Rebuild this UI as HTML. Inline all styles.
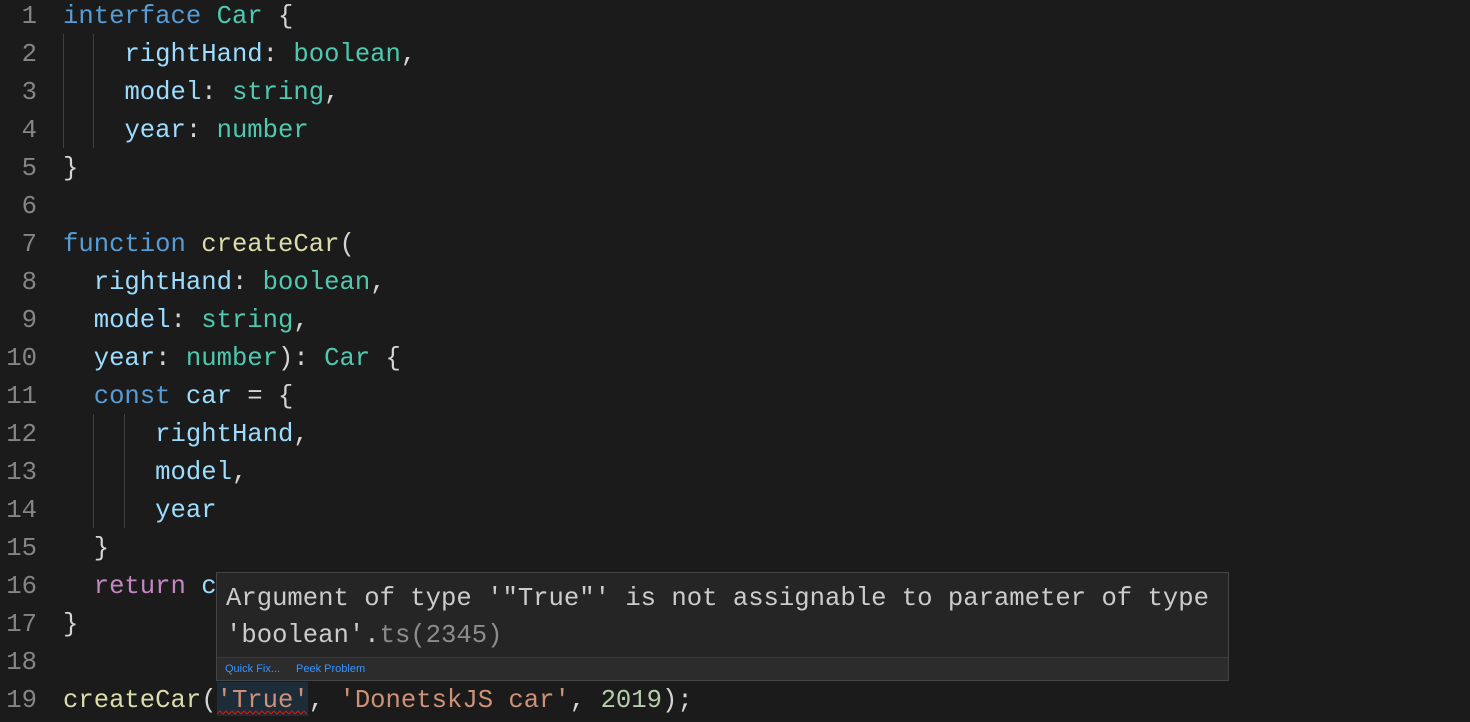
<!DOCTYPE html>
<html><head><meta charset="utf-8"><style>
html,body{margin:0;padding:0;background:#1b1b1b;width:1470px;height:722px;overflow:hidden}
.ed{position:absolute;left:0;top:-2px;font-family:"Liberation Mono",monospace;font-size:25.6px;line-height:38px;color:#d4d4d4;white-space:pre}
.ln{position:absolute;left:0;width:37px;text-align:right;color:#858585}
.code{position:absolute;left:63px}
.k{color:#569cd6}.t{color:#4ec9b0}.p{color:#9cdcfe}.f{color:#dcdcaa}.s{color:#ce9178}.n{color:#b5cea8}.r{color:#c586c0}
.g{position:absolute;width:1px;background:#404040}
.hov{position:absolute;left:216px;top:572px;width:1011px;height:107px;background:#252526;border:1px solid #454545}
.ht{position:absolute;left:9px;top:7px;font-family:"Liberation Mono",monospace;font-size:25.6px;line-height:37px;color:#cccccc;white-space:pre}
.foot{position:absolute;left:0;bottom:0;width:100%;height:22px;background:#2c2c2d;border-top:1px solid #3a3a3a;font-family:"Liberation Sans",sans-serif;font-size:11px;line-height:22px;color:#3794ff}
</style></head><body>
<div class="g" style="left:63px;top:34px;height:114px"></div>
<div class="g" style="left:93px;top:34px;height:114px"></div>
<div class="g" style="left:93px;top:414px;height:114px"></div>
<div class="g" style="left:124px;top:414px;height:114px"></div>
<div style="position:absolute;left:217px;top:682px;width:91px;height:34px;background:#1c2c38"></div>
<div class="ed"><div class="ln">1
2
3
4
5
6
7
8
9
10
11
12
13
14
15
16
17
18
19</div><div class="code"><span class="k">interface</span> <span class="t">Car</span> {
    <span class="p">rightHand</span>: <span class="t">boolean</span>,
    <span class="p">model</span>: <span class="t">string</span>,
    <span class="p">year</span>: <span class="t">number</span>
}

<span class="k">function</span> <span class="f">createCar</span>(
  <span class="p">rightHand</span>: <span class="t">boolean</span>,
  <span class="p">model</span>: <span class="t">string</span>,
  <span class="p">year</span>: <span class="t">number</span>): <span class="t">Car</span> {
  <span class="k">const</span> <span class="p">car</span> = {
      <span class="p">rightHand</span>,
      <span class="p">model</span>,
      <span class="p">year</span>
  }
  <span class="r">return</span> <span class="p">car</span>
}

<span class="f">createCar</span>(<span class="s">'True'</span>, <span class="s">'DonetskJS car'</span>, <span class="n">2019</span>);</div></div>
<svg style="position:absolute;left:217px;top:710px" width="91" height="6"><path d="M0 4 L3 1 L6 4 L9 1 L12 4 L15 1 L18 4 L21 1 L24 4 L27 1 L30 4 L33 1 L36 4 L39 1 L42 4 L45 1 L48 4 L51 1 L54 4 L57 1 L60 4 L63 1 L66 4 L69 1 L72 4 L75 1 L78 4 L81 1 L84 4 L87 1 L90 4" stroke="#e51400" fill="none" stroke-width="1"/></svg>
<div class="hov">
<div class="ht">Argument of type '"True"' is not assignable to parameter of type
'boolean'.<span style="color:#8c8c8c">ts(2345)</span></div>
<div class="foot"><span style="margin-left:8px">Quick Fix...</span><span style="margin-left:16px">Peek Problem</span></div>
</div>
</body></html>
